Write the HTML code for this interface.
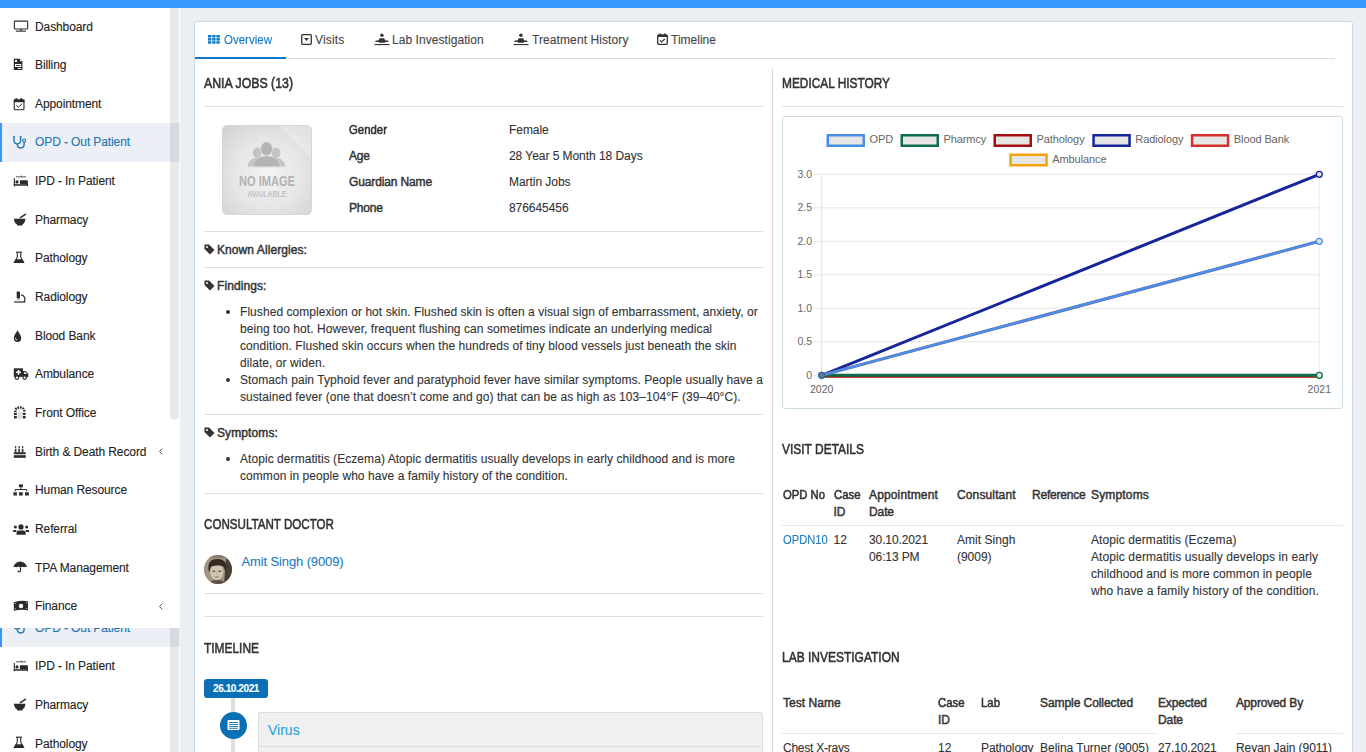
<!DOCTYPE html>
<html><head><meta charset="utf-8">
<style>
*{box-sizing:border-box;margin:0;padding:0}
html,body{width:1366px;height:752px;overflow:hidden}
body{position:relative;background:#ebeef3;font-family:"Liberation Sans",sans-serif;font-size:12px;color:#333}
.a{position:absolute;white-space:nowrap;-webkit-text-stroke-width:0.1px}
#topbar{position:absolute;left:0;top:0;width:1366px;height:8px;background:#3598fd}
.sb{position:absolute;left:0;width:180px;background:#fff;overflow:hidden}
.sb ul{position:absolute;left:0;width:180px;list-style:none}
.sb li{position:relative;-webkit-text-stroke-width:0.1px;height:38.667px;line-height:38.667px;font-size:12px;color:#222;padding-left:35px;letter-spacing:-0.1px}
.sb li svg.ic{position:absolute;left:12px;top:10.8px}
.sb li.act{background:#eceff6;color:#1f76ad}
.sb li.act:before{content:"";position:absolute;left:0;top:0;width:2px;height:100%;background:#3597fd}
.sb li svg.chev{position:absolute;left:158px;top:15.3px}
.thumb{position:absolute;left:170px;width:9px;background:rgba(0,0,0,0.085);border-radius:2px 2px 5px 5px}
#panel{position:absolute;left:194px;top:21px;width:1159px;height:760px;background:#fff;border:1px solid #c8d9e3;border-radius:3px}
.hr{position:absolute;height:1px;background:#dcdcdc}
.t12{font-size:12px;line-height:17px}
.h{font-size:13px;font-weight:bold;color:#333;letter-spacing:-0.3px}
</style></head><body>
<div id="topbar"></div>
<div class="sb" style="top:8px;height:620px"><ul style="top:-0.5px"><li><svg class="ic" width="18" height="16" viewBox="0 0 18 16"><rect x="2.35" y="3.15" width="13.3" height="7.9" rx="0.8" fill="none" stroke="#2b2b2b" stroke-width="1.1"/><rect x="8.3" y="11" width="1.4" height="1.8" fill="#2b2b2b"/><rect x="3.9" y="12.6" width="10.1" height="1.1" fill="#2b2b2b"/></svg>Dashboard</li><li><svg class="ic" width="18" height="16" viewBox="0 0 18 16"><path d="M1.8 1.8h6.2l2.4 2.4v8.8H1.8z" fill="#2b2b2b"/><path d="M8 1.8v2.4h2.4" fill="#fff"/><rect x="3" y="3" width="2" height="2" fill="#fff"/><rect x="3" y="7" width="6.2" height="3" fill="#fff"/><rect x="4" y="8.1" width="4.2" height="0.9" fill="#2b2b2b"/><rect x="6" y="11" width="3.2" height="1" fill="#fff"/></svg>Billing</li><li><svg class="ic" width="18" height="16" viewBox="0 0 18 16"><rect x="2.25" y="4.1" width="9.7" height="9.6" rx="0.8" fill="none" stroke="#2b2b2b" stroke-width="1.1"/><rect x="1.7" y="3.6" width="10.8" height="2.6" fill="#2b2b2b"/><rect x="3.1" y="2.3" width="2.6" height="2" rx="0.8" fill="#2b2b2b"/><rect x="8" y="2.3" width="2.6" height="2" rx="0.8" fill="#2b2b2b"/><path d="M4.3 9.3l2 2 3.6-3.5" fill="none" stroke="#2b2b2b" stroke-width="1"/></svg>Appointment</li><li class="act"><svg class="ic" width="18" height="16" viewBox="0 0 18 16"><path d="M2 2.4v4.2a3.3 3.3 0 0 0 6.6 0V2.4" fill="none" stroke="#1f76ad" stroke-width="1.4"/><path d="M5.3 10v0.6a3.4 3.4 0 0 0 6.8 0V8" fill="none" stroke="#1f76ad" stroke-width="1.4"/><circle cx="12.1" cy="6.5" r="1.5" fill="none" stroke="#1f76ad" stroke-width="1.1"/><rect x="1.3" y="2" width="1.6" height="1" fill="#1f76ad"/><rect x="7.7" y="2" width="1.6" height="1" fill="#1f76ad"/></svg>OPD - Out Patient</li><li><svg class="ic" width="18" height="16" viewBox="0 0 18 16"><rect x="1.8" y="5" width="1.1" height="8.3" fill="#2b2b2b"/><path d="M7.9 7.3h7a1 1 0 0 1 1 1v3H7.9z" fill="#2b2b2b"/><circle cx="5" cy="8.9" r="1.6" fill="#2b2b2b"/><rect x="1.8" y="11.2" width="14.1" height="1.5" fill="#2b2b2b"/><rect x="14.9" y="11" width="1" height="2.3" fill="#2b2b2b"/><path d="M4 3.8h4.5l0.8-1 0.8 1.8 0.6-0.8H14" fill="none" stroke="#2b2b2b" stroke-width="0.8"/></svg>IPD - In Patient</li><li><svg class="ic" width="18" height="16" viewBox="0 0 18 16"><path d="M1.7 6.7H13.6L12.6 10.2Q11.8 11.8 10.5 12.3V13.6H5V12.3Q3.6 11.8 2.8 10.2Z" fill="#2b2b2b"/><path d="M8.3 5.6L13.4 2.4" stroke="#2b2b2b" stroke-width="1.5" stroke-linecap="round"/></svg>Pharmacy</li><li><svg class="ic" width="18" height="16" viewBox="0 0 18 16"><rect x="4" y="1.6" width="6" height="1.2" fill="#2b2b2b"/><path d="M5.3 2.6V7.2L2.4 12.4H11.6L8.7 7.2V2.6" fill="none" stroke="#2b2b2b" stroke-width="1.1"/><path d="M3.6 9.3H10.4L12.3 12.9H1.7Z" fill="#2b2b2b"/></svg>Pathology</li><li><svg class="ic" width="18" height="16" viewBox="0 0 18 16"><rect x="4.7" y="2.5" width="3.3" height="7" rx="0.8" fill="#2b2b2b"/><rect x="2" y="12.4" width="11.5" height="1.2" fill="#2b2b2b"/><path d="M8.9 5.9A4.4 4.4 0 0 1 12.3 12.6" fill="none" stroke="#2b2b2b" stroke-width="1.3"/><rect x="5" y="10.3" width="3" height="0.8" fill="#2b2b2b" opacity="0.5"/></svg>Radiology</li><li><svg class="ic" width="18" height="16" viewBox="0 0 18 16"><path d="M5.5 2.3C4.6 4.6 1.8 7 1.8 10.2a3.7 3.7 0 0 0 7.4 0C9.2 7 6.4 4.6 5.5 2.3z" fill="#2b2b2b"/><path d="M3.4 9.8a2.1 2.1 0 0 0 2 2.2" fill="none" stroke="#fff" stroke-width="0.8"/></svg>Blood Bank</li><li><svg class="ic" width="18" height="16" viewBox="0 0 18 16"><rect x="1.8" y="2.3" width="9.2" height="8.6" fill="#2b2b2b"/><path d="M11 5H13.6L16.3 8V10.9H11Z" fill="#2b2b2b"/><path d="M12.2 6.1H13.2L14.8 8H12.2Z" fill="#fff"/><path d="M6.5 3.9v4.8M4.1 6.3h4.8" stroke="#fff" stroke-width="1.6"/><circle cx="5" cy="11.6" r="1.8" fill="#fff" stroke="#2b2b2b" stroke-width="1.2"/><circle cx="12.7" cy="11.6" r="1.8" fill="#fff" stroke="#2b2b2b" stroke-width="1.2"/></svg>Ambulance</li><li><svg class="ic" width="18" height="16" viewBox="0 0 18 16"><path d="M3.4 7V5.2A4.5 3.3 0 0 1 12.3 5.2V7" fill="none" stroke="#2b2b2b" stroke-width="2.4" stroke-dasharray="1.6 0.9"/><rect x="2" y="7.8" width="2.8" height="2.2" fill="#2b2b2b"/><rect x="2" y="10.9" width="2.8" height="2.6" fill="#2b2b2b"/><rect x="10.8" y="7.8" width="2.8" height="2.2" fill="#2b2b2b"/><rect x="10.8" y="10.9" width="2.8" height="2.6" fill="#2b2b2b"/><path d="M6.3 6.5V13.7M7.8 6.5V13.7M9.3 6.5V13.7" stroke="#9aa" stroke-width="0.6"/></svg>Front Office</li><li><svg class="ic" width="18" height="16" viewBox="0 0 18 16"><rect x="2.8" y="4.7" width="1.6" height="3.6" fill="#2b2b2b"/><rect x="6.3" y="4.7" width="1.6" height="3.6" fill="#2b2b2b"/><rect x="9.8" y="4.7" width="1.6" height="3.6" fill="#2b2b2b"/><ellipse cx="3.6" cy="3" rx="0.8" ry="1" fill="#2b2b2b"/><ellipse cx="7.1" cy="3" rx="0.8" ry="1" fill="#2b2b2b"/><ellipse cx="10.6" cy="3" rx="0.8" ry="1" fill="#2b2b2b"/><path d="M1.8 8.2H13.8V9.8Q12.8 10.8 11.8 10 10.8 10.8 9.8 10 8.8 10.8 7.8 10 6.8 10.8 5.8 10 4.8 10.8 3.8 10 2.8 10.8 1.8 9.8Z" fill="#2b2b2b"/><rect x="1.8" y="11.2" width="12" height="2.6" fill="#2b2b2b"/></svg>Birth &amp; Death Record<svg class="chev" width="6" height="8" viewBox="0 0 6 8"><path d="M4.3 0.6L1.5 3.5 4.3 6.3" fill="none" stroke="#555" stroke-width="1"/></svg></li><li><svg class="ic" width="18" height="16" viewBox="0 0 18 16"><rect x="6.9" y="2.4" width="4" height="2.8" fill="#2b2b2b"/><path d="M8.9 5.2V7.5M3.2 9.3V7.5H14.6V9.3" fill="none" stroke="#2b2b2b" stroke-width="1"/><rect x="1.4" y="10.3" width="3.5" height="3.2" fill="#2b2b2b"/><rect x="7" y="10.3" width="3.8" height="3.2" fill="#2b2b2b"/><rect x="13" y="10.3" width="3.8" height="3.2" fill="#2b2b2b"/></svg>Human Resource</li><li><svg class="ic" width="18" height="16" viewBox="0 0 18 16"><circle cx="9" cy="5.9" r="2.6" fill="#2b2b2b"/><circle cx="3.4" cy="5.9" r="1.5" fill="#2b2b2b"/><circle cx="14.7" cy="5.9" r="1.5" fill="#2b2b2b"/><path d="M4.5 13.7V11.6A2.4 2.2 0 0 1 6.9 9.4H11.3A2.4 2.2 0 0 1 13.7 11.6V13.7Z" fill="#2b2b2b"/><path d="M1 11V10A1.2 1.1 0 0 1 2.2 8.9H4.3V11Z" fill="#2b2b2b"/><path d="M17.2 11V10A1.2 1.1 0 0 0 16 8.9H13.9V11Z" fill="#2b2b2b"/></svg>Referral</li><li><svg class="ic" width="18" height="16" viewBox="0 0 18 16"><path d="M8.3 1.8V2.6C4.5 2.8 1.8 5.5 1.5 8.3 2.5 7.4 3.6 7.4 4.4 8.3 5.4 7.4 7 7.4 8.3 8.3 9.6 7.4 11.2 7.4 12.2 8.3 13 7.4 14.1 7.4 15 8.3 14.7 5.5 12 2.8 8.3 2.6Z" fill="#2b2b2b"/><path d="M8.5 8.3V11.6A1.3 1.3 0 0 1 5.9 11.6" fill="none" stroke="#2b2b2b" stroke-width="1.1"/></svg>TPA Management</li><li><svg class="ic" width="18" height="16" viewBox="0 0 18 16"><path d="M1.8 4.2Q8.9 2.2 16 3.2V12.2Q8.9 11.2 1.8 12.7Z" fill="#2b2b2b"/><circle cx="9" cy="8" r="2.2" fill="#fff"/><circle cx="3.3" cy="5.5" r="0.7" fill="#8ab"/><circle cx="3.3" cy="10.8" r="0.7" fill="#8ab"/><circle cx="14.6" cy="4.8" r="0.7" fill="#8ab"/><circle cx="14.6" cy="10.4" r="0.7" fill="#8ab"/></svg>Finance<svg class="chev" width="6" height="8" viewBox="0 0 6 8"><path d="M4.3 0.6L1.5 3.5 4.3 6.3" fill="none" stroke="#555" stroke-width="1"/></svg></li></ul><div class="thumb" style="top:0;height:412px"></div></div>
<div class="sb" style="top:628px;height:124px"><ul style="top:-135.3px"><li></li><li></li><li></li><li class="act"><svg class="ic" width="18" height="16" viewBox="0 0 18 16"><path d="M2 2.4v4.2a3.3 3.3 0 0 0 6.6 0V2.4" fill="none" stroke="#1f76ad" stroke-width="1.4"/><path d="M5.3 10v0.6a3.4 3.4 0 0 0 6.8 0V8" fill="none" stroke="#1f76ad" stroke-width="1.4"/><circle cx="12.1" cy="6.5" r="1.5" fill="none" stroke="#1f76ad" stroke-width="1.1"/><rect x="1.3" y="2" width="1.6" height="1" fill="#1f76ad"/><rect x="7.7" y="2" width="1.6" height="1" fill="#1f76ad"/></svg>OPD - Out Patient</li><li><svg class="ic" width="18" height="16" viewBox="0 0 18 16"><rect x="1.8" y="5" width="1.1" height="8.3" fill="#2b2b2b"/><path d="M7.9 7.3h7a1 1 0 0 1 1 1v3H7.9z" fill="#2b2b2b"/><circle cx="5" cy="8.9" r="1.6" fill="#2b2b2b"/><rect x="1.8" y="11.2" width="14.1" height="1.5" fill="#2b2b2b"/><rect x="14.9" y="11" width="1" height="2.3" fill="#2b2b2b"/><path d="M4 3.8h4.5l0.8-1 0.8 1.8 0.6-0.8H14" fill="none" stroke="#2b2b2b" stroke-width="0.8"/></svg>IPD - In Patient</li><li><svg class="ic" width="18" height="16" viewBox="0 0 18 16"><path d="M1.7 6.7H13.6L12.6 10.2Q11.8 11.8 10.5 12.3V13.6H5V12.3Q3.6 11.8 2.8 10.2Z" fill="#2b2b2b"/><path d="M8.3 5.6L13.4 2.4" stroke="#2b2b2b" stroke-width="1.5" stroke-linecap="round"/></svg>Pharmacy</li><li><svg class="ic" width="18" height="16" viewBox="0 0 18 16"><rect x="4" y="1.6" width="6" height="1.2" fill="#2b2b2b"/><path d="M5.3 2.6V7.2L2.4 12.4H11.6L8.7 7.2V2.6" fill="none" stroke="#2b2b2b" stroke-width="1.1"/><path d="M3.6 9.3H10.4L12.3 12.9H1.7Z" fill="#2b2b2b"/></svg>Pathology</li></ul><div class="thumb" style="top:0;height:200px;border-radius:0"></div></div>
<div id="panel"></div>
<div class="a" style="left:195px;top:58px;width:1140px;height:1px;background:#dddddd"></div>
<div class="a" style="left:195px;top:57px;width:91px;height:2px;background:#0e7acb"></div>
<svg class="a" style="left:208px;top:35px" width="12" height="9" viewBox="0 0 12 9"><rect x="0.0" y="0.0" width="3.4" height="2.5" fill="#0e7acb"/><rect x="4.2" y="0.0" width="3.4" height="2.5" fill="#0e7acb"/><rect x="8.4" y="0.0" width="3.4" height="2.5" fill="#0e7acb"/><rect x="0.0" y="3.1" width="3.4" height="2.5" fill="#0e7acb"/><rect x="4.2" y="3.1" width="3.4" height="2.5" fill="#0e7acb"/><rect x="8.4" y="3.1" width="3.4" height="2.5" fill="#0e7acb"/><rect x="0.0" y="6.2" width="3.4" height="2.5" fill="#0e7acb"/><rect x="4.2" y="6.2" width="3.4" height="2.5" fill="#0e7acb"/><rect x="8.4" y="6.2" width="3.4" height="2.5" fill="#0e7acb"/></svg>
<div class="a" style="left:224px;top:32px;font-size:12px;line-height:17px;color:#0e7acb;transform:scaleX(0.9597);transform-origin:0 0">Overview</div>
<svg class="a" style="left:301px;top:34px" width="11" height="11" viewBox="0 0 11 11"><rect x="0.7" y="0.7" width="9.6" height="9.6" rx="1" fill="none" stroke="#333" stroke-width="1.3"/><path d="M3 4h5l-2.5 3z" fill="#333"/></svg>
<div class="a" style="left:315px;top:32px;font-size:12px;line-height:17px;color:#444;letter-spacing:0.174px">Visits</div>
<svg class="a" style="left:374px;top:32px" width="16" height="14" viewBox="0 0 16 14"><circle cx="7.9" cy="3.2" r="1.7" fill="#333"/><path d="M5.6 6.2H10.2L11.2 8.2 14.4 8.8V10H10.8V10.8H5V10H1.4V8.8L4.6 8.2Z" fill="#333"/><rect x="0.5" y="12" width="15" height="1.1" fill="#333"/></svg>
<div class="a" style="left:392px;top:32px;font-size:12px;line-height:17px;color:#444;letter-spacing:0.057px">Lab Investigation</div>
<svg class="a" style="left:513px;top:32px" width="16" height="14" viewBox="0 0 16 14"><circle cx="7.9" cy="3.2" r="1.7" fill="#333"/><path d="M5.6 6.2H10.2L11.2 8.2 14.4 8.8V10H10.8V10.8H5V10H1.4V8.8L4.6 8.2Z" fill="#333"/><rect x="0.5" y="12" width="15" height="1.1" fill="#333"/></svg>
<div class="a" style="left:532px;top:32px;font-size:12px;line-height:17px;color:#444;letter-spacing:0.093px">Treatment History</div>
<svg class="a" style="left:657px;top:33px" width="11" height="12" viewBox="0 0 11 12"><rect x="0.7" y="2" width="9.6" height="9.3" rx="1" fill="none" stroke="#333" stroke-width="1.3"/><rect x="0.7" y="2" width="9.6" height="2" fill="#333"/><rect x="2.5" y="0.3" width="1.3" height="2.5" fill="#333"/><rect x="7.2" y="0.3" width="1.3" height="2.5" fill="#333"/><path d="M3 7.3l1.7 1.7 3-3" fill="none" stroke="#333" stroke-width="1.2"/></svg>
<div class="a" style="left:671px;top:32px;font-size:12px;line-height:17px;color:#444;letter-spacing:0.012px">Timeline</div>
<div class="a" style="left:772px;top:68px;width:1px;height:700px;background:#d9d9d9"></div>
<div class="a" style="left:204px;top:75px;font-size:14px;line-height:17px;color:#333;-webkit-text-stroke:0.55px #333;transform:scaleX(0.8798);transform-origin:0 0">ANIA JOBS (13)</div>
<div class="a" style="left:204px;top:106px;width:559px;height:1px;background:#dedede"></div>
<div class="a" style="left:222px;top:125px;width:90px;height:90px;border-radius:5px;background:radial-gradient(ellipse 62px 62px at 45px 48px,#f3f3f3 0%,#e6e6e6 55%,#d3d3d3 100%);border:1px solid #d6d6d6;overflow:hidden">
<svg width="90" height="90" viewBox="0 0 90 90" style="position:absolute;left:-1px;top:-1px">
<polygon points="56,0 90,0 90,34" fill="#fff" opacity="0.28"/>
<ellipse cx="35.2" cy="27.8" rx="4.4" ry="5.2" fill="#c4c4c4"/><ellipse cx="54" cy="27.8" rx="4.4" ry="5.2" fill="#c4c4c4"/>
<path d="M25.5 41.5C26.5 35.5 30 33 35.2 33S43 35.5 44 41.5Z" fill="#c4c4c4"/><path d="M45 41.5C46 35.5 49.5 33 54 33S62.5 35.5 63.5 41.5Z" fill="#c4c4c4"/>
<ellipse cx="44.6" cy="23.8" rx="5.8" ry="6.8" fill="#b4b4b4" stroke="#d8d8d8" stroke-width="0.8"/>
<path d="M30.5 41.8C31.5 34.5 37 31 44.6 31S57.7 34.5 58.7 41.8Z" fill="#b4b4b4" stroke="#d8d8d8" stroke-width="0.8"/>
<text x="17" y="61.2" textLength="56" lengthAdjust="spacingAndGlyphs" font-family="Liberation Sans" font-weight="bold" font-size="13.8" fill="#b3b3b3">NO IMAGE</text>
<text x="25.5" y="72" textLength="39" lengthAdjust="spacingAndGlyphs" font-family="Liberation Sans" font-weight="bold" font-size="8.8" fill="#c2c2c2">AVAILABLE</text>
</svg></div>
<div class="a" style="left:349px;top:122px;font-size:12px;line-height:17px;color:#333;-webkit-text-stroke:0.55px #333;transform:scaleX(0.9493);transform-origin:0 0">Gender</div>
<div class="a" style="left:509px;top:122px;font-size:12px;line-height:17px;color:#333;letter-spacing:-0.050px">Female</div>
<div class="a" style="left:349px;top:148px;font-size:12px;line-height:17px;color:#333;-webkit-text-stroke:0.45px #333;letter-spacing:-0.200px">Age</div>
<div class="a" style="left:509px;top:148px;font-size:12px;line-height:17px;color:#333;letter-spacing:-0.050px">28 Year 5 Month 18 Days</div>
<div class="a" style="left:349px;top:174px;font-size:12px;line-height:17px;color:#333;-webkit-text-stroke:0.45px #333;letter-spacing:-0.132px">Guardian Name</div>
<div class="a" style="left:509px;top:174px;font-size:12px;line-height:17px;color:#333;letter-spacing:-0.050px">Martin Jobs</div>
<div class="a" style="left:349px;top:200px;font-size:12px;line-height:17px;color:#333;-webkit-text-stroke:0.45px #333;letter-spacing:-0.200px">Phone</div>
<div class="a" style="left:509px;top:200px;font-size:12px;line-height:17px;color:#333;letter-spacing:-0.050px">876645456</div>
<div class="a" style="left:204px;top:231px;width:559px;height:1px;background:#dedede"></div>
<svg class="a" style="left:204px;top:244px" width="11" height="11" viewBox="0 0 11 11"><path d="M0.5 0.5h4.5l5.5 5.5-4.5 4.5-5.5-5.5z" fill="#333"/><circle cx="3" cy="3" r="1" fill="#fff"/></svg>
<div class="a" style="left:217px;top:242px;font-size:12px;line-height:17px;color:#333;-webkit-text-stroke:0.45px #333;letter-spacing:0.080px">Known Allergies:</div>
<div class="a" style="left:204px;top:267px;width:559px;height:1px;background:#dedede"></div>
<svg class="a" style="left:204px;top:280px" width="11" height="11" viewBox="0 0 11 11"><path d="M0.5 0.5h4.5l5.5 5.5-4.5 4.5-5.5-5.5z" fill="#333"/><circle cx="3" cy="3" r="1" fill="#fff"/></svg>
<div class="a" style="left:217px;top:278px;font-size:12px;line-height:17px;color:#333;-webkit-text-stroke:0.45px #333;letter-spacing:0.089px">Findings:</div>
<div class="a" style="left:240px;top:304px;font-size:12px;line-height:17px;color:#333;letter-spacing:0.060px">Flushed complexion or hot skin. Flushed skin is often a visual sign of embarrassment, anxiety, or</div>
<div class="a" style="left:240px;top:321px;font-size:12px;line-height:17px;color:#333;letter-spacing:0.060px">being too hot. However, frequent flushing can sometimes indicate an underlying medical</div>
<div class="a" style="left:240px;top:338px;font-size:12px;line-height:17px;color:#333;letter-spacing:0.060px">condition. Flushed skin occurs when the hundreds of tiny blood vessels just beneath the skin</div>
<div class="a" style="left:240px;top:355px;font-size:12px;line-height:17px;color:#333;letter-spacing:0.060px">dilate, or widen.</div>
<div class="a" style="left:240px;top:372px;font-size:12px;line-height:17px;color:#333;letter-spacing:0.060px">Stomach pain Typhoid fever and paratyphoid fever have similar symptoms. People usually have a</div>
<div class="a" style="left:240px;top:389px;font-size:12px;line-height:17px;color:#333;letter-spacing:0.060px">sustained fever (one that doesn’t come and go) that can be as high as 103–104°F (39–40°C).</div>
<div class="a" style="left:225.5px;top:310px;width:4px;height:4px;border-radius:2px;background:#333"></div>
<div class="a" style="left:225.5px;top:378px;width:4px;height:4px;border-radius:2px;background:#333"></div>
<div class="a" style="left:204px;top:414px;width:559px;height:1px;background:#dedede"></div>
<svg class="a" style="left:204px;top:427px" width="11" height="11" viewBox="0 0 11 11"><path d="M0.5 0.5h4.5l5.5 5.5-4.5 4.5-5.5-5.5z" fill="#333"/><circle cx="3" cy="3" r="1" fill="#fff"/></svg>
<div class="a" style="left:217px;top:425px;font-size:12px;line-height:17px;color:#333;-webkit-text-stroke:0.45px #333;letter-spacing:0.109px">Symptoms:</div>
<div class="a" style="left:240px;top:451px;font-size:12px;line-height:17px;color:#333;letter-spacing:0.060px">Atopic dermatitis (Eczema) Atopic dermatitis usually develops in early childhood and is more</div>
<div class="a" style="left:240px;top:468px;font-size:12px;line-height:17px;color:#333;letter-spacing:0.060px">common in people who have a family history of the condition.</div>
<div class="a" style="left:225.5px;top:457px;width:4px;height:4px;border-radius:2px;background:#333"></div>
<div class="a" style="left:204px;top:493px;width:559px;height:1px;background:#dedede"></div>
<div class="a" style="left:204px;top:516px;font-size:14px;line-height:17px;color:#333;-webkit-text-stroke:0.55px #333;transform:scaleX(0.8287);transform-origin:0 0">CONSULTANT DOCTOR</div>
<svg class="a" style="left:204px;top:555px" width="28" height="29" viewBox="0 0 28 29">
<defs><clipPath id="cc"><ellipse cx="14" cy="14.5" rx="13.9" ry="14.4"/></clipPath><filter id="bl" x="-20%" y="-20%" width="140%" height="140%"><feGaussianBlur stdDeviation="0.55"/></filter></defs>
<g clip-path="url(#cc)"><rect width="28" height="29" fill="#8c7d6c"/>
<g filter="url(#bl)">
<rect x="-2" y="-2" width="32" height="34" fill="#a39583"/>
<rect x="-2" y="-2" width="32" height="5" fill="#8a7b6a"/>
<path d="M22 4H30V29H20Z" fill="#4a3f35"/>
<path d="M4.5 15C3.5 7 7.5 4 13 4S22.5 6 22.5 13L21.5 17 19.5 11H7L5.5 17Z" fill="#352c24"/>
<ellipse cx="12.8" cy="17" rx="6.6" ry="8.3" fill="#d1c5b4"/>
<path d="M6 12.5C6.5 8.5 9.5 7.5 13.5 7.5S20 8.5 20.5 12.5C18 10.5 16 10.3 13 10.5S8 11 6 12.5Z" fill="#352c24"/>
<ellipse cx="9.8" cy="16.2" rx="1.7" ry="0.8" fill="#5a4c40"/><ellipse cx="15.8" cy="16.2" rx="1.7" ry="0.8" fill="#5a4c40"/>
<rect x="12.3" y="16.5" width="1" height="3.5" fill="#b9ab98"/>
<ellipse cx="12.8" cy="22" rx="2.4" ry="0.7" fill="#978876"/>
<path d="M5 29C6 25.5 9.5 25 13 25S20 25.5 22 29Z" fill="#5e5145"/>
</g></g></svg>
<div class="a" style="left:241.5px;top:553px;font-size:13px;line-height:17px;color:#1c7bbf;letter-spacing:-0.121px">Amit Singh (9009)</div>
<div class="a" style="left:204px;top:593px;width:559px;height:1px;background:#dedede"></div>
<div class="a" style="left:204px;top:616px;width:559px;height:1px;background:#dedede"></div>
<div class="a" style="left:204px;top:640px;font-size:14px;line-height:17px;color:#333;-webkit-text-stroke:0.55px #333;transform:scaleX(0.8517);transform-origin:0 0">TIMELINE</div>
<div class="a" style="left:204px;top:679px;width:64px;height:19px;border-radius:3px;background:#0b6fb6;color:#fff;font-size:10px;font-weight:bold;line-height:19px;text-align:center;letter-spacing:-0.4px">26.10.2021</div>
<div class="a" style="left:231px;top:698px;width:4px;height:60px;background:#dddddd"></div>
<div class="a" style="left:258px;top:712px;width:505px;height:60px;background:#f0f0f0;border:1px solid #dddddd;border-radius:2px"></div>
<div class="a" style="left:259px;top:746px;width:503px;height:1px;background:#dddddd"></div>
<div class="a" style="left:220px;top:712px;width:27px;height:27px;border-radius:50%;background:#0b6fb6"></div>
<svg class="a" style="left:227px;top:719px" width="13" height="12" viewBox="0 0 13 12"><rect x="0.5" y="1" width="12" height="10" rx="1" fill="#fff"/><path d="M2 3.5h9M2 5.5h9M2 7.5h9M2 9.3h9" stroke="#0b6fb6" stroke-width="0.9"/></svg>
<div class="a" style="left:268px;top:722px;font-size:14px;line-height:17px;color:#2aa3dc">Virus</div>
<div class="a" style="left:782px;top:75px;font-size:14px;line-height:17px;color:#333;-webkit-text-stroke:0.55px #333;transform:scaleX(0.8482);transform-origin:0 0">MEDICAL HISTORY</div>
<div class="a" style="left:782px;top:106px;width:561px;height:1px;background:#dedede"></div>
<div class="a" style="left:782px;top:116px;width:561px;height:293px;border:1px solid #cfdde6;border-radius:3px;background:#fff"></div>
<svg class="a" style="left:0;top:0" width="1366" height="752" viewBox="0 0 1366 752"><line x1="813" y1="375.3" x2="1319.8" y2="375.3" stroke="#e6e6e6" stroke-width="1"/><text x="812" y="378.5" text-anchor="end" font-family="Liberation Sans" font-size="10.5" fill="#666">0</text><line x1="813" y1="341.8" x2="1319.8" y2="341.8" stroke="#e6e6e6" stroke-width="1"/><text x="812" y="345.0" text-anchor="end" font-family="Liberation Sans" font-size="10.5" fill="#666">0.5</text><line x1="813" y1="308.3" x2="1319.8" y2="308.3" stroke="#e6e6e6" stroke-width="1"/><text x="812" y="311.5" text-anchor="end" font-family="Liberation Sans" font-size="10.5" fill="#666">1.0</text><line x1="813" y1="274.8" x2="1319.8" y2="274.8" stroke="#e6e6e6" stroke-width="1"/><text x="812" y="278.0" text-anchor="end" font-family="Liberation Sans" font-size="10.5" fill="#666">1.5</text><line x1="813" y1="241.3" x2="1319.8" y2="241.3" stroke="#e6e6e6" stroke-width="1"/><text x="812" y="244.5" text-anchor="end" font-family="Liberation Sans" font-size="10.5" fill="#666">2.0</text><line x1="813" y1="207.8" x2="1319.8" y2="207.8" stroke="#e6e6e6" stroke-width="1"/><text x="812" y="211.0" text-anchor="end" font-family="Liberation Sans" font-size="10.5" fill="#666">2.5</text><line x1="813" y1="174.3" x2="1319.8" y2="174.3" stroke="#e6e6e6" stroke-width="1"/><text x="812" y="177.5" text-anchor="end" font-family="Liberation Sans" font-size="10.5" fill="#666">3.0</text><line x1="821.7" y1="174.3" x2="821.7" y2="381.3" stroke="#e0e0e0" stroke-width="1"/><line x1="1319.3" y1="174.3" x2="1319.3" y2="381.3" stroke="#ececec" stroke-width="1"/><text x="821.7" y="393" text-anchor="middle" font-family="Liberation Sans" font-size="10.5" fill="#666">2020</text><text x="1319.3" y="393" text-anchor="middle" font-family="Liberation Sans" font-size="10.5" fill="#666">2021</text><line x1="821.7" y1="375.90000000000003" x2="1319.3" y2="375.90000000000003" stroke="#f1a30c" stroke-width="3"/><line x1="821.7" y1="375.90000000000003" x2="1319.3" y2="375.90000000000003" stroke="#d6322b" stroke-width="3"/><line x1="821.7" y1="375.90000000000003" x2="1319.3" y2="375.90000000000003" stroke="#a50f0f" stroke-width="3"/><line x1="821.7" y1="375.3" x2="1319.3" y2="174.3" stroke="#16259a" stroke-width="3"/><line x1="821.7" y1="375.3" x2="1319.3" y2="375.3" stroke="#0f6b48" stroke-width="3"/><line x1="821.7" y1="375.3" x2="1319.3" y2="241.3" stroke="#6a6fa5" stroke-width="3.2"/><line x1="821.7" y1="375.3" x2="1319.3" y2="241.3" stroke="#4a8fe7" stroke-width="2.2"/><circle cx="821.7" cy="375.3" r="3" fill="#e3e3e3" stroke="#4a8fe7" stroke-width="1.3"/><circle cx="1319.3" cy="241.3" r="3" fill="#e3e3e3" stroke="#4a8fe7" stroke-width="1.3"/><circle cx="1319.3" cy="174.3" r="3" fill="#e3e3e3" stroke="#16259a" stroke-width="1.3"/><circle cx="1319.3" cy="375.3" r="3" fill="#e3e3e3" stroke="#0f6b48" stroke-width="1.3"/><circle cx="821.7" cy="375.3" r="3.2" fill="#5577aa" stroke="#34608f" stroke-width="1"/><rect x="827.75" y="135.25" width="36" height="10.5" fill="#e6e6e6" stroke="#4a8fe7" stroke-width="2.5"/><text x="869.5" y="143" font-family="Liberation Sans" font-size="11" fill="#666" letter-spacing="-0.1">OPD</text><rect x="901.75" y="135.25" width="36" height="10.5" fill="#e6e6e6" stroke="#0f6b48" stroke-width="2.5"/><text x="943.5" y="143" font-family="Liberation Sans" font-size="11" fill="#666" letter-spacing="-0.1">Pharmcy</text><rect x="994.75" y="135.25" width="36" height="10.5" fill="#e6e6e6" stroke="#a50f0f" stroke-width="2.5"/><text x="1036.5" y="143" font-family="Liberation Sans" font-size="11" fill="#666" letter-spacing="-0.1">Pathology</text><rect x="1093.55" y="135.25" width="36" height="10.5" fill="#e6e6e6" stroke="#16259a" stroke-width="2.5"/><text x="1135.3" y="143" font-family="Liberation Sans" font-size="11" fill="#666" letter-spacing="-0.1">Radiology</text><rect x="1192.05" y="135.25" width="36" height="10.5" fill="#e6e6e6" stroke="#d6322b" stroke-width="2.5"/><text x="1233.8" y="143" font-family="Liberation Sans" font-size="11" fill="#666" letter-spacing="-0.1">Blood Bank</text><rect x="1010.55" y="154.75" width="36" height="10.5" fill="#e6e6e6" stroke="#f1a30c" stroke-width="2.5"/><text x="1052.3" y="162.5" font-family="Liberation Sans" font-size="11" fill="#666" letter-spacing="-0.1">Ambulance</text></svg>
<div class="a" style="left:782px;top:441px;font-size:14px;line-height:17px;color:#333;-webkit-text-stroke:0.55px #333;transform:scaleX(0.8544);transform-origin:0 0">VISIT DETAILS</div>
<div class="a" style="left:783px;top:487px;font-size:12px;line-height:17px;color:#333;-webkit-text-stroke:0.55px #333;transform:scaleX(0.9399);transform-origin:0 0">OPD No</div>
<div class="a" style="left:833.5px;top:487px;font-size:12px;line-height:17px;color:#333;-webkit-text-stroke:0.55px #333;transform:scaleX(0.9459);transform-origin:0 0">Case</div>
<div class="a" style="left:833.5px;top:504px;font-size:12px;line-height:17px;color:#333;-webkit-text-stroke:0.45px #333;letter-spacing:-0.100px">ID</div>
<div class="a" style="left:869px;top:487px;font-size:12px;line-height:17px;color:#333;-webkit-text-stroke:0.45px #333;letter-spacing:0.146px">Appointment</div>
<div class="a" style="left:869px;top:504px;font-size:12px;line-height:17px;color:#333;-webkit-text-stroke:0.45px #333;letter-spacing:-0.100px">Date</div>
<div class="a" style="left:957px;top:487px;font-size:12px;line-height:17px;color:#333;-webkit-text-stroke:0.45px #333;letter-spacing:0.133px">Consultant</div>
<div class="a" style="left:1032px;top:487px;font-size:12px;line-height:17px;color:#333;-webkit-text-stroke:0.45px #333;letter-spacing:-0.197px">Reference</div>
<div class="a" style="left:1091px;top:487px;font-size:12px;line-height:17px;color:#333;-webkit-text-stroke:0.45px #333;letter-spacing:0.164px">Symptoms</div>
<div class="a" style="left:782px;top:525px;width:561px;height:1px;background:#e8e8e8"></div>
<div class="a" style="left:783px;top:532px;font-size:12px;line-height:17px;color:#1c7bbf;transform:scaleX(0.9306);transform-origin:0 0">OPDN10</div>
<div class="a" style="left:833.5px;top:532px;font-size:12px;line-height:17px;color:#333">12</div>
<div class="a" style="left:869px;top:532px;font-size:12px;line-height:17px;color:#333;letter-spacing:-0.106px">30.10.2021</div>
<div class="a" style="left:869px;top:549px;font-size:12px;line-height:17px;color:#333;letter-spacing:-0.109px">06:13 PM</div>
<div class="a" style="left:957px;top:532px;font-size:12px;line-height:17px;color:#333;letter-spacing:0.047px">Amit Singh</div>
<div class="a" style="left:957px;top:549px;font-size:12px;line-height:17px;color:#333;letter-spacing:-0.031px">(9009)</div>
<div class="a" style="left:1091px;top:532px;font-size:12px;line-height:17px;color:#333;letter-spacing:0.082px">Atopic dermatitis (Eczema)</div>
<div class="a" style="left:1091px;top:549px;font-size:12px;line-height:17px;color:#333;letter-spacing:0.098px">Atopic dermatitis usually develops in early</div>
<div class="a" style="left:1091px;top:566px;font-size:12px;line-height:17px;color:#333;letter-spacing:0.058px">childhood and is more common in people</div>
<div class="a" style="left:1091px;top:583px;font-size:12px;line-height:17px;color:#333;letter-spacing:0.121px">who have a family history of the condition.</div>
<div class="a" style="left:782px;top:649px;font-size:14px;line-height:17px;color:#333;-webkit-text-stroke:0.55px #333;transform:scaleX(0.8557);transform-origin:0 0">LAB INVESTIGATION</div>
<div class="a" style="left:783px;top:695px;font-size:12px;line-height:17px;color:#333;-webkit-text-stroke:0.45px #333;letter-spacing:0.038px">Test Name</div>
<div class="a" style="left:938px;top:695px;font-size:12px;line-height:17px;color:#333;-webkit-text-stroke:0.55px #333;transform:scaleX(0.9459);transform-origin:0 0">Case</div>
<div class="a" style="left:938px;top:712px;font-size:12px;line-height:17px;color:#333;-webkit-text-stroke:0.45px #333;letter-spacing:-0.100px">ID</div>
<div class="a" style="left:981px;top:695px;font-size:12px;line-height:17px;color:#333;-webkit-text-stroke:0.55px #333;transform:scaleX(0.9485);transform-origin:0 0">Lab</div>
<div class="a" style="left:1040px;top:695px;font-size:12px;line-height:17px;color:#333;-webkit-text-stroke:0.45px #333;letter-spacing:-0.066px">Sample Collected</div>
<div class="a" style="left:1158px;top:695px;font-size:12px;line-height:17px;color:#333;-webkit-text-stroke:0.45px #333;letter-spacing:-0.168px">Expected</div>
<div class="a" style="left:1158px;top:712px;font-size:12px;line-height:17px;color:#333;-webkit-text-stroke:0.45px #333;letter-spacing:-0.100px">Date</div>
<div class="a" style="left:1236px;top:695px;font-size:12px;line-height:17px;color:#333;-webkit-text-stroke:0.45px #333;letter-spacing:-0.156px">Approved By</div>
<div class="a" style="left:782px;top:733px;width:376px;height:1px;background:#e8e8e8"></div>
<div class="a" style="left:1236px;top:733px;width:107px;height:1px;background:#e8e8e8"></div>
<div class="a" style="left:783px;top:740px;font-size:12px;line-height:17px;color:#333;letter-spacing:-0.238px">Chest X-rays</div>
<div class="a" style="left:938px;top:740px;font-size:12px;line-height:17px;color:#333">12</div>
<div class="a" style="left:981px;top:740px;font-size:12px;line-height:17px;color:#333;letter-spacing:-0.100px">Pathology</div>
<div class="a" style="left:1040px;top:740px;font-size:12px;line-height:17px;color:#333;letter-spacing:-0.020px">Belina Turner (9005)</div>
<div class="a" style="left:1158px;top:740px;font-size:12px;line-height:17px;color:#333;letter-spacing:-0.146px">27.10.2021</div>
<div class="a" style="left:1236px;top:740px;font-size:12px;line-height:17px;color:#333;letter-spacing:-0.069px">Reyan Jain (9011)</div>
</body></html>
